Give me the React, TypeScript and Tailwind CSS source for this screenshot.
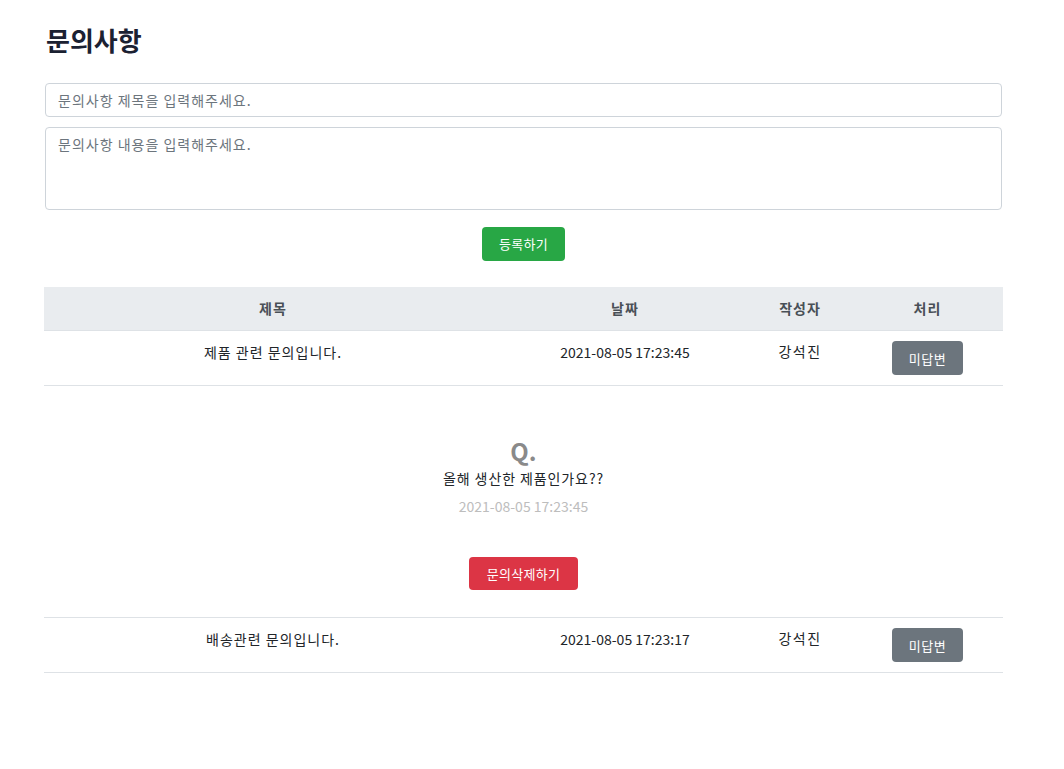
const font = { fontFamily: '"Noto Sans CJK KR", "Noto Sans", sans-serif' }

type Inquiry = {
    title: string
    date: string
    author: string
    open?: boolean
    body?: string
}

const inquiries: Inquiry[] = [
    {
        title: "제품 관련 문의입니다.",
        date: "2021-08-05 17:23:45",
        author: "강석진",
        open: true,
        body: "올해 생산한 제품인가요??",
    },
    {
        title: "배송관련 문의입니다.",
        date: "2021-08-05 17:23:17",
        author: "강석진",
    },
]

const cols = "grid grid-cols-[458px_246px_104px_151px]"

function Row({ item }: { item: Inquiry }) {
    return (
        <>
            <div className={`${cols} h-[55px] border-b border-[#dee2e6] text-[14px] leading-[21px] text-[#212529]`}>
                <div className="pt-[11px] text-center tracking-[1px]">{item.title}</div>
                <div className="pt-[11px] text-center">{item.date}</div>
                <div className="pt-[10px] text-center tracking-[1.5px]">{item.author}</div>
                <div className="flex justify-center pt-[10px]">
                    <button className="h-[34px] w-[71px] rounded-[4px] bg-[#6c757d] text-[13px] tracking-[0.5px] text-white">
                        미답변
                    </button>
                </div>
            </div>
            {item.open && (
                <div className="flex h-[232px] flex-col items-center border-b border-[#dee2e6] pt-[50px]">
                    <div className="text-[24px] font-bold leading-[30px] text-[#8a8a8a]">Q.</div>
                    <div className="mt-[-2px] text-[14px] leading-[28px] tracking-[0.9px] text-[#212529]">{item.body}</div>
                    <div className="text-[14px] leading-[28px] text-[#bdbdbd]">{item.date}</div>
                    <button className="mt-[37px] h-[33px] w-[109px] rounded-[4px] bg-[#dc3545] text-[13px] tracking-[0.3px] text-white">
                        문의삭제하기
                    </button>
                </div>
            )}
        </>
    )
}

export default function App() {
    return (
        <div className="min-h-screen bg-white" style={font}>
            <main className="w-[959px] ml-[44px] pt-[24px]">
                <h1 className="ml-[2px] text-[26px] font-bold leading-[32px] text-[#1b2132]">문의사항</h1>

                <div className="mt-[27px] px-[1px]">
                    <input
                        className="block h-[34px] w-full rounded-[4px] border border-[#ced4da] px-[12px] text-[14px] tracking-[1px] outline-none placeholder:text-[#6c757d]"
                        placeholder="문의사항 제목을 입력해주세요."
                    />
                    <textarea
                        className="mt-[10px] block h-[83px] w-full resize-none rounded-[4px] border border-[#ced4da] px-[12px] py-[6px] text-[14px] leading-[21px] tracking-[1px] outline-none placeholder:text-[#6c757d]"
                        placeholder="문의사항 내용을 입력해주세요."
                    />
                </div>

                <div className="mt-[17px] flex justify-center">
                    <button className="h-[34px] w-[83px] rounded-[4px] bg-[#28a745] text-[13px] tracking-[0.3px] text-white">
                        등록하기
                    </button>
                </div>

                <div className="mt-[26px]">
                    <div className={`${cols} h-[44px] items-center border-b border-[#dee2e6] bg-[#e9ecef] text-[14px] font-bold tracking-[1px] text-[#495057]`}>
                        <div className="text-center">제목</div>
                        <div className="text-center">날짜</div>
                        <div className="text-center">작성자</div>
                        <div className="text-center">처리</div>
                    </div>
                    {inquiries.map((item) => (
                        <Row key={item.date} item={item} />
                    ))}
                </div>
            </main>
        </div>
    )
}
